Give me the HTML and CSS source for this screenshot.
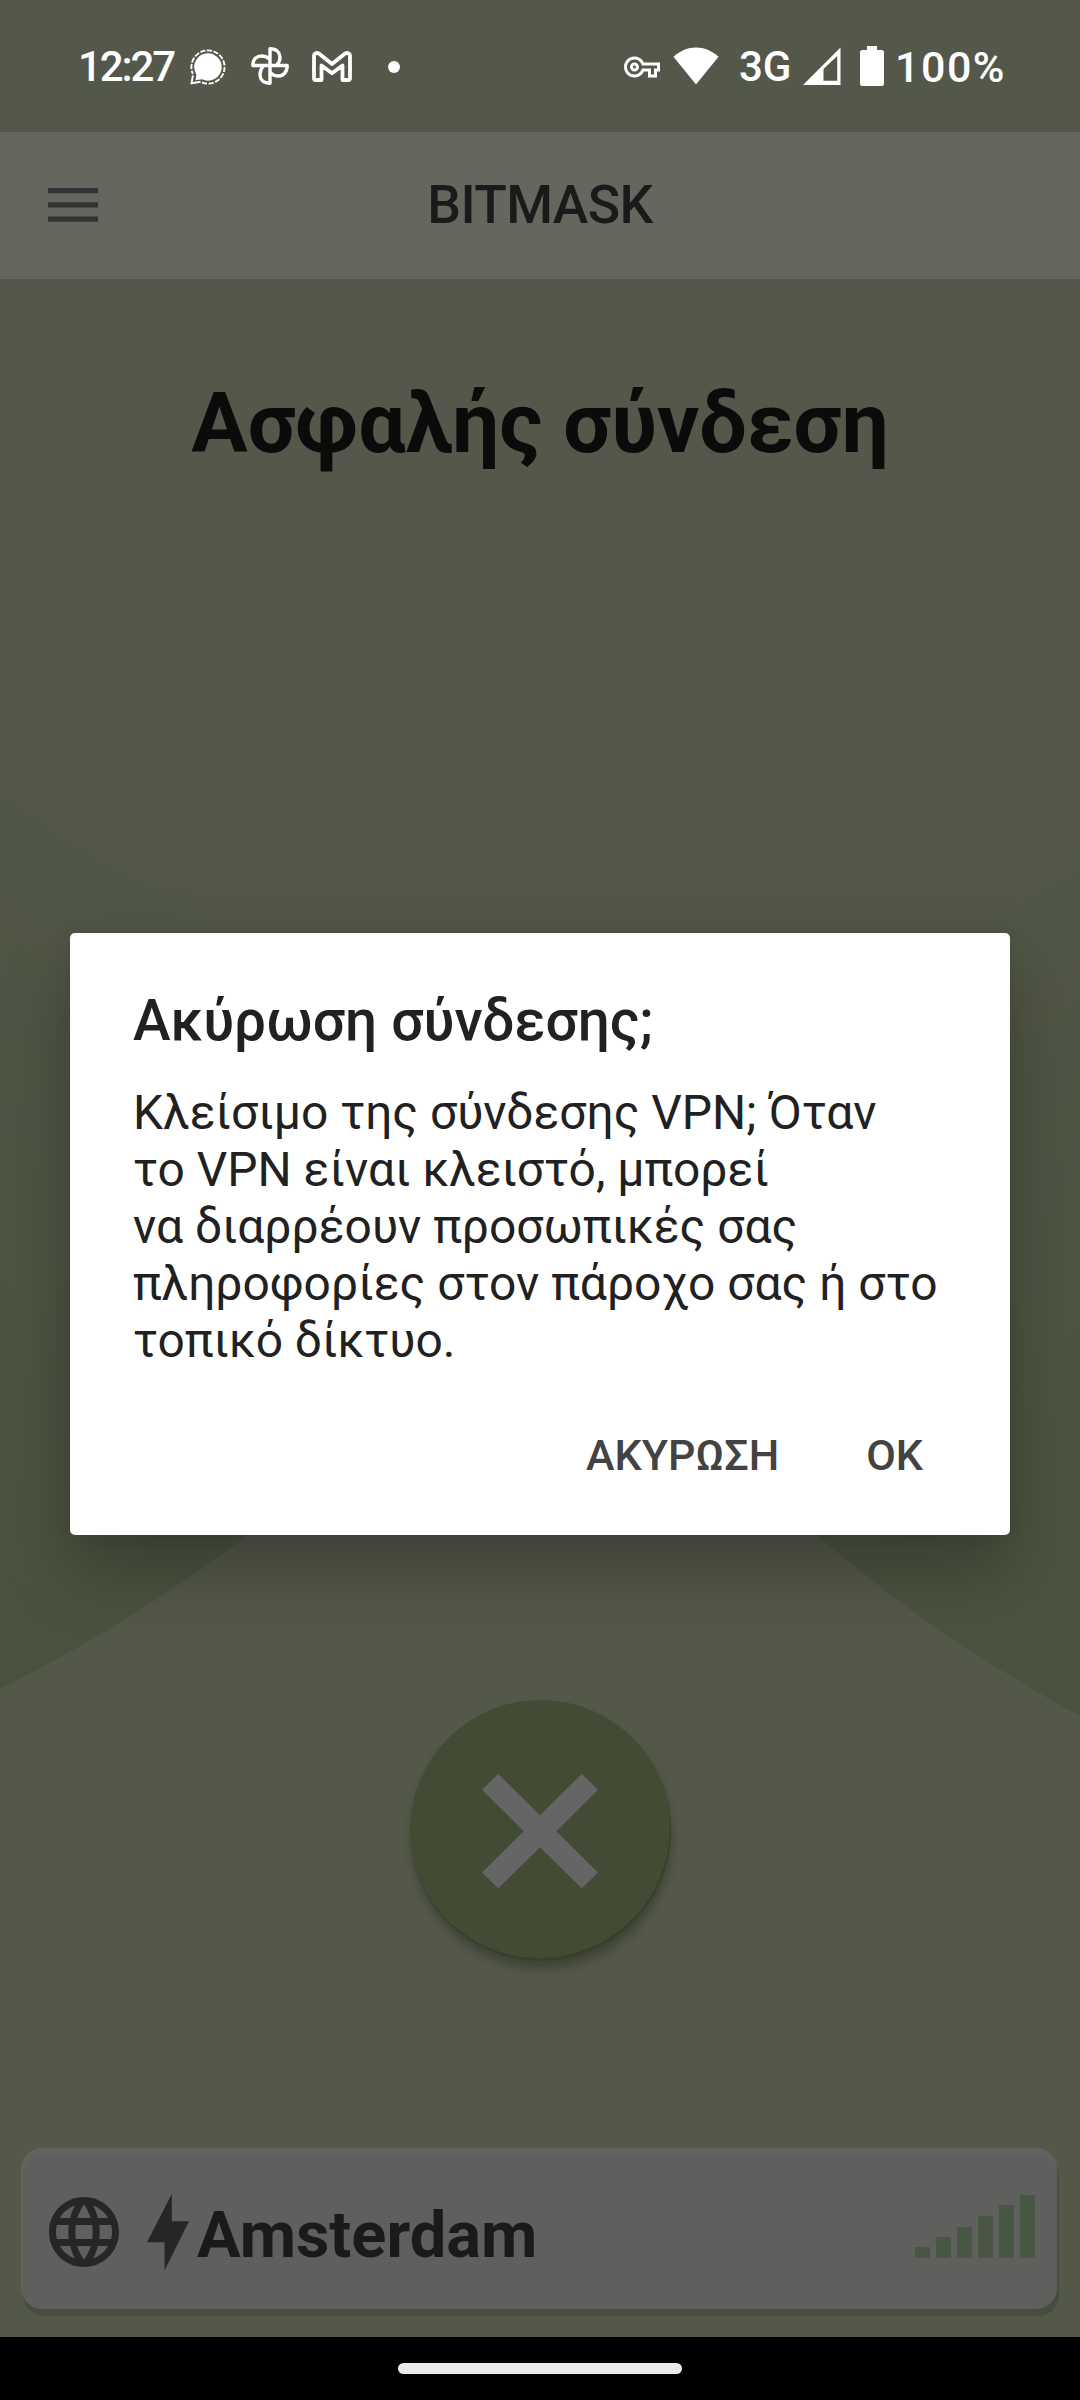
FILE: index.html
```html
<!DOCTYPE html>
<html lang="el">
<head>
<meta charset="utf-8">
<title>Bitmask</title>
<link rel="stylesheet" href="styles.css">
</head>
<body>
<div class="screen">
  <header class="status">
    <span class="clock">12:27</span>
    <svg class="ic-chat" width="36" height="36" viewBox="0 0 36 36">
      <path d="M18 4.300A13.700 13.700 0 1 1 12 30.300L5.500 31.200L6.300 25.200A13.700 13.700 0 0 1 18 4.300Z" fill="#fff"/>
      <path d="M12 33.500A16.600 16.600 0 1 0 2.900 25" fill="none" stroke="#fff" stroke-width="1.900" stroke-dasharray="5.200 1.500"/>
      <path d="M2.900 26.500L1.500 34.300L10.500 32.800" fill="none" stroke="#fff" stroke-width="1.900"/>
    </svg>
    <svg class="ic-photos" width="38" height="38" viewBox="0 0 38 38" fill="none" stroke="#fff" stroke-width="3.400" stroke-linejoin="round">
      <path d="M19 18.500V1.800C26 1.800 29 6 29 10.200C29 14 27.500 16.500 25.500 18.500"/>
      <path d="M19 18.500H36.200C36.200 25.500 32 29 27.500 29C23.500 29 21 27.500 19 25.500"/>
      <path d="M19 18.500V36.200C12 36.200 9 32 9 27.500C9 23.500 10.500 21 12.500 18.500"/>
      <path d="M19 18.500H1.800C1.800 12 6 9 10.500 9C14.500 9 17 10.500 19 12.500"/>
    </svg>
    <svg class="ic-mail" width="40" height="32" viewBox="0 0 40 32" fill="none" stroke="#fff" stroke-width="3.800" stroke-linejoin="round">
      <path d="M2 27V5.200C2 2 5 1.200 7.200 2.800L20 13L32.800 2.800C35 1.200 38 2 38 5.200V27Q38 29 36.300 29H30.500V14.500L20 22.300L9.500 14.500V29H3.700Q2 29 2 27Z"/>
    </svg>
    <span class="dot"></span>
    <span class="spacer"></span>
    <svg class="ic-key" width="36" height="36" viewBox="0 0 24 24" fill="#fff"><path d="M22 19h-6v-4h-2.680c-1.140 2.420-3.600 4-6.320 4-3.860 0-7-3.140-7-7s3.140-7 7-7c2.720 0 5.170 1.580 6.320 4H24v6h-2v4zm-4-2h2v-4h2v-2H11.940l-.23-.67C11.010 8.340 9.110 7 7 7c-2.760 0-5 2.240-5 5s2.240 5 5 5c2.110 0 4.010-1.340 4.710-3.330l.23-.67H18v4zM7 15c-1.650 0-3-1.350-3-3s1.350-3 3-3 3 1.350 3 3-1.350 3-3 3zm0-4c-.55 0-1 .45-1 1s.45 1 1 1 1-.45 1-1-.45-1-1-1z"/></svg>
    <svg class="ic-wifi" width="46" height="38" viewBox="0 0 46 38" fill="#fff"><path d="M.5 9.800C14 -2.600 32 -2.600 45.500 9.800L23 37.500Z"/></svg>
    <span class="net">3G</span>
    <svg class="ic-signal" width="38" height="38" viewBox="0 0 38 38" fill="#fff"><path fill-rule="evenodd" d="M0 38L37.500 .5V38ZM20.500 22V33.800H34.200V9Z"/></svg>
    <svg class="ic-battery" width="24" height="40" viewBox="0 0 24 40" fill="#fff"><path d="M7 0H17V4H21.500Q24 4 24 6.500V37.500Q24 40 21.500 40H2.500Q0 40 0 37.500V6.500Q0 4 2.500 4H7Z"/></svg>
    <span class="percent">100%</span>
  </header>

  <nav class="toolbar">
    <svg class="menu" width="50" height="34" viewBox="0 0 50 34" fill="#333"><path d="M0 0H50V5.300H0ZM0 14.300H50V19.600H0ZM0 28.500H50V33.800H0Z"/></svg>
    <span class="brand">BITMASK</span>
  </nav>

  <main class="main">
    <svg class="ground" width="1080" height="860" viewBox="0 0 1080 860"><path d="M0 212Q130 147 248 58L530 0L817 58Q930 157 1080 239V860H0Z" fill="#545849"/></svg>
    <h1 class="heading">Ασφαλής σύνδεση</h1>
    <button class="fab" aria-label="Άκυρο">
      <svg width="116" height="116" viewBox="0 0 116 116" fill="#656565"><path d="M16.300 .8L58 42.200L99.700 .8L116 16.800L74.300 58.200L116 99.500L99.700 115.300L58 74.300L16.300 115.300L0 99.500L41.700 58.200L0 16.800Z"/></svg>
    </button>
    <section class="location">
      <svg class="globe" width="84" height="84" viewBox="0 0 24 24" fill="#262626"><path d="M11.990 2C6.470 2 2 6.480 2 12s4.470 10 9.990 10C17.520 22 22 17.520 22 12S17.520 2 11.990 2zm6.930 6h-2.950c-.32-1.250-.78-2.450-1.380-3.560 1.840.63 3.370 1.910 4.330 3.560zM12 4.040c.83 1.200 1.480 2.530 1.910 3.960h-3.820c.43-1.430 1.080-2.760 1.910-3.960zM4.260 14C4.100 13.360 4 12.690 4 12s.1-1.360.26-2h3.380c-.08.66-.14 1.320-.14 2s.06 1.340.14 2H4.260zm.82 2h2.950c.32 1.250.78 2.450 1.380 3.560-1.840-.63-3.370-1.900-4.330-3.560zm2.950-8H5.080c.96-1.660 2.490-2.930 4.330-3.560C8.810 5.550 8.350 6.750 8.030 8zM12 19.960c-.83-1.200-1.480-2.530-1.910-3.960h3.820c-.43 1.430-1.080 2.760-1.910 3.960zM14.340 14H9.660c-.09-.66-.16-1.320-.16-2s.07-1.350.16-2h4.680c.09.65.16 1.320.16 2s-.07 1.340-.16 2zm.25 5.560c.6-1.110 1.060-2.310 1.380-3.560h2.950c-.96 1.650-2.490 2.930-4.330 3.560zM16.360 14c.08-.66.14-1.320.14-2s-.06-1.340-.14-2h3.380c.16.64.26 1.310.26 2s-.1 1.360-.26 2h-3.380z"/></svg>
      <svg class="bolt" width="42" height="77" viewBox="0 0 42 77" fill="#262626"><path d="M24.800 0V27.300H42L17.500 76.500V48.300H0Z"/></svg>
      <span class="city">Amsterdam</span>
      <span class="bars"><i class="b1"></i><i class="b2"></i><i class="b3"></i><i class="b4"></i><i class="b5"></i><i class="b6"></i></span>
    </section>
  </main>

  <footer class="navbar"><span class="pill"></span></footer>

  <div class="dialog" role="dialog">
    <h2 class="dialog-title">Ακύρωση σύνδεσης;</h2>
    <p class="dialog-text">Κλείσιμο της σύνδεσης VPN; Όταν<br>το VPN είναι κλειστό, μπορεί<br>να διαρρέουν προσωπικές σας<br>πληροφορίες στον πάροχο σας ή στο<br>τοπικό δίκτυο.</p>
    <div class="actions">
      <span class="action cancel">ΑΚΥΡΩΣΗ</span>
      <span class="action ok">OK</span>
    </div>
  </div>
</div>
</body>
</html>
```
FILE: styles.css
```css
* { box-sizing: border-box; }
body { margin: 0; background: #000; font-family: Roboto, "Liberation Sans", sans-serif; }
svg { display: block; flex: none; }

.screen {
  position: relative;
  width: 1080px;
  height: 2400px;
  overflow: hidden;
  display: flex;
  flex-direction: column;
}

.status {
  height: 132px;
  background: #54584a;
  display: flex;
  align-items: flex-start;
  padding: 0 76px 0 78px;
  color: #fff;
  font-size: 42px;
  line-height: 50px;
  font-weight: 500;
  white-space: nowrap;
}
.clock, .net, .percent { margin-top: 42px; flex: none; }
.clock { width: 112px; letter-spacing: -2.1px; }
.ic-chat { margin-top: 49px; }
.ic-photos { margin: 47px 0 0 25px; }
.ic-mail { margin: 51px 0 0 23px; }
.dot { width: 12px; height: 12px; border-radius: 50%; background: #fff; margin: 61px 0 0 36px; }
.spacer { flex: 1; }
.ic-key { margin: 49px 13px 0 0; }
.ic-wifi { margin: 47px 20px 0 0; }
.net { width: 64px; }
.ic-signal { margin: 47px 19px 0 0; }
.ic-battery { margin: 46px 11px 0 0; }
.percent { width: 109px; font-size: 43px; letter-spacing: 1.5px; }

.toolbar {
  height: 147px;
  background: #66665e;
  display: grid;
  grid-template-columns: 1fr auto 1fr;
  align-items: center;
  padding: 0 48px;
}
.menu { margin-top: -1px; }
.brand { margin-top: -1px; font-size: 53.500px; line-height: 64px; font-weight: 500; color: #1a1a1a; letter-spacing: -.6px; }

.main {
  position: relative;
  height: 2058px;
  background: radial-gradient(circle at 600px -279px, #54584a 650px, #4a523d 1800px);
  display: flex;
  flex-direction: column;
  align-items: center;
  padding: 95px 21px 0;
}
.ground { position: absolute; left: 0; bottom: 0; }
.main > :not(.ground) { position: relative; }
.heading { margin: 0; font-size: 83.900px; line-height: 98px; font-weight: 700; color: #0b0b0b; white-space: nowrap; }
.fab {
  margin: 1228px 0 0;
  width: 261px;
  height: 261px;
  padding: 0;
  border: 0;
  border-radius: 50%;
  background: #424c34;
  box-shadow: inset -1px -3px 0 #384029, 1px 8px 9px rgba(20, 25, 20, .3);
  display: flex;
  align-items: center;
  justify-content: center;
}
.location {
  margin: 187px 2px 0 0;
  width: 1036px;
  height: 161px;
  border-radius: 21px;
  background: #5f5f5d;
  box-shadow: inset 1px 7px 0 #626260, 2px 7px 0 #484e3f;
  display: flex;
  align-items: flex-start;
  padding: 0 22px 0 21px;
}
.globe { margin-top: 42px; }
.bolt { margin: 46px 8px 0 21px; }
.city { margin-top: 49px; font-size: 65px; line-height: 76px; font-weight: 700; color: #1a1a1a; flex: 1; }
.bars { display: flex; align-items: flex-end; gap: 6px; height: 63px; margin-top: 47px; }
.bars i { width: 15px; background: #475743; }
.b1 { height: 11px; }
.b2 { height: 21px; }
.b3 { height: 31px; }
.b4 { height: 42px; }
.b5 { height: 53px; }
.b6 { height: 63px; }

.navbar { flex: 1; background: #000; display: flex; justify-content: center; padding-top: 26px; }
.pill { width: 284px; height: 11px; border-radius: 6px; background: #eaeaea; }

.dialog {
  position: absolute;
  left: 70px;
  top: 933px;
  width: 940px;
  height: 602px;
  border-radius: 5px;
  background: #fff;
  box-shadow: 0 36px 70px rgba(0, 0, 0, .25), 0 0 18px rgba(0, 0, 0, .06);
  padding: 56px 63px 0;
}
.dialog-title { margin: 0; font-size: 56.700px; line-height: 64px; font-weight: 500; color: #212121; white-space: nowrap; }
.dialog-text { margin: 32px 0 0; font-size: 47.950px; line-height: 57px; color: #212121; white-space: nowrap; }
.actions { display: flex; justify-content: flex-end; gap: 87px; margin-top: 60px; padding-right: 24px; font-size: 43px; line-height: 50px; font-weight: 500; color: #434343; }
```
